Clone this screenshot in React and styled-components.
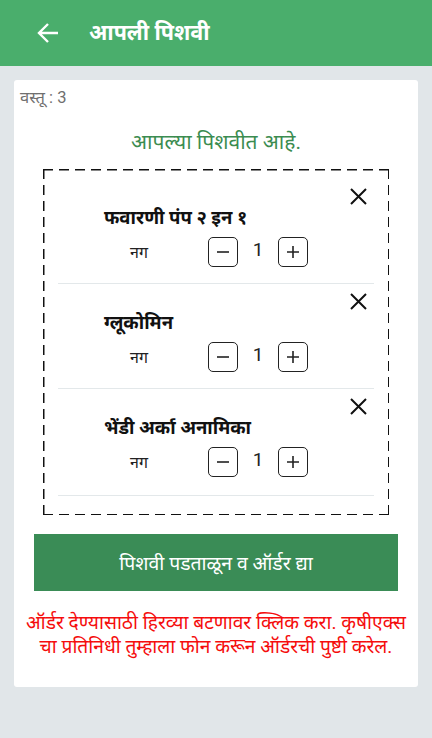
import React, { useState } from "react";
import styled, { createGlobalStyle } from "styled-components";

const Global = createGlobalStyle`
  html, body { margin: 0; padding: 0; }
  body {
    background: #e1e6e9;
    font-family: Roboto, "Noto Sans", "Noto Sans Devanagari", sans-serif;
  }
  * { box-sizing: border-box; }
`;

const Page = styled.div`
  width: 432px;
  min-height: 738px;
  background: #e1e6e9;
  display: flex;
  flex-direction: column;
`;

const Header = styled.header`
  height: 66px;
  background: #4aae6c;
  display: flex;
  align-items: center;
  padding-left: 36px;
  gap: 29px;
  color: #fff;
`;

const Title = styled.h1`
  margin: 0;
  font-size: 21.5px;
  font-weight: 700;
  line-height: 1;
`;

const Card = styled.main`
  margin: 14px 14px 0;
  height: 607px;
  background: #fff;
  border-radius: 3px;
  padding: 8px 0 0;
  display: flex;
  flex-direction: column;
`;

const Count = styled.div`
  padding-left: 6px;
  font-size: 16.5px;
  line-height: 20px;
  color: #6f6f6f;
`;

const Heading = styled.h2`
  margin: 22px 0 15px;
  text-align: center;
  font-size: 21px;
  font-weight: 400;
  line-height: 24px;
  color: #3b8c50;
`;

const DashBox = styled.section`
  margin: 0 29px;
  height: 346px;
  padding: 10px 15px 0;
  background:
    repeating-linear-gradient(90deg, #111 0 10px, transparent 10px 16px) top left / 100% 1.5px no-repeat,
    repeating-linear-gradient(90deg, #111 0 10px, transparent 10px 16px) bottom left / 100% 1.5px no-repeat,
    repeating-linear-gradient(180deg, #111 0 10px, transparent 10px 16px) top left / 1.5px 100% no-repeat,
    repeating-linear-gradient(180deg, #111 0 10px, transparent 10px 16px) top right / 1.5px 100% no-repeat;
`;

const Item = styled.div`
  display: flex;
  flex-direction: column;
  padding-top: 9px;
  border-bottom: 1px solid #e3e8ea;
  height: ${(p) => p.$h}px;
`;

const CloseRow = styled.div`
  height: 18px;
  display: flex;
  justify-content: flex-end;
  padding-right: 7px;
`;

const CloseBtn = styled.button`
  border: 0;
  background: none;
  padding: 0;
  width: 17px;
  height: 17px;
  display: block;
  cursor: pointer;
`;

const Name = styled.div`
  margin-left: 46px;
  font-size: 18.5px;
  font-weight: 700;
  line-height: 24px;
  color: #111;
`;

const QtyRow = styled.div`
  margin-top: 7px;
  margin-left: 72px;
  display: flex;
  align-items: center;
  height: 30px;
`;

const Unit = styled.span`
  width: 78px;
  font-size: 16px;
  color: #222;
`;

const StepBtn = styled.button`
  width: 30px;
  height: 30px;
  border: 1.5px solid #222;
  border-radius: 5px;
  background: #fff;
  padding: 0;
  display: flex;
  align-items: center;
  justify-content: center;
  cursor: pointer;
`;

const Qty = styled.span`
  width: 40px;
  text-align: center;
  font-size: 19px;
  color: #222;
  margin-top: -6px;
`;

const OrderButton = styled.button`
  margin: 19px 20px 0;
  height: 57px;
  border: 0;
  background: #3a8c56;
  color: #fff;
  font-family: inherit;
  font-size: 19.4px;
  cursor: pointer;
`;

const Note = styled.p`
  margin: 20px 6px 0;
  text-align: center;
  color: #f50d0d;
  font-size: 19.2px;
  line-height: 24px;
`;

const Minus = () => (
  <svg width="14" height="14" viewBox="0 0 14 14">
    <path d="M1 7h12" stroke="#222" strokeWidth="1.6" />
  </svg>
);
const Plus = () => (
  <svg width="14" height="14" viewBox="0 0 14 14">
    <path d="M1 7h12M7 1v12" stroke="#222" strokeWidth="1.6" />
  </svg>
);
const Cross = () => (
  <svg width="17" height="17" viewBox="0 0 17 17">
    <path d="M1 1L16 16M16 1L1 16" stroke="#111" strokeWidth="2" />
  </svg>
);
const Back = () => (
  <svg width="24" height="24" viewBox="0 0 24 24">
    <path d="M22 12H3M12 3l-9 9 9 9" fill="none" stroke="#fff" strokeWidth="2.4" />
  </svg>
);

const items = [
  { name: "फवारणी पंप २ इन १", h: 105 },
  { name: "ग्लूकोमिन", h: 105 },
  { name: "भेंडी अर्का अनामिका", h: 107 },
];

export default function App() {
  const [qty, setQty] = useState(items.map(() => 1));
  const change = (i, d) => setQty(qty.map((q, j) => (j === i ? Math.max(1, q + d) : q)));
  return (
    <Page>
      <Global />
      <Header>
        <Back />
        <Title>आपली पिशवी</Title>
      </Header>
      <Card>
        <Count>वस्तू : 3</Count>
        <Heading>आपल्या पिशवीत आहे.</Heading>
        <DashBox>
          {items.map((it, i) => (
            <Item key={i} $h={it.h}>
              <CloseRow>
                <CloseBtn aria-label="remove">
                  <Cross />
                </CloseBtn>
              </CloseRow>
              <Name>{it.name}</Name>
              <QtyRow>
                <Unit>नग</Unit>
                <StepBtn onClick={() => change(i, -1)}>
                  <Minus />
                </StepBtn>
                <Qty>{qty[i]}</Qty>
                <StepBtn onClick={() => change(i, 1)}>
                  <Plus />
                </StepBtn>
              </QtyRow>
            </Item>
          ))}
        </DashBox>
        <OrderButton>पिशवी पडताळून व ऑर्डर द्या</OrderButton>
        <Note>
          ऑर्डर देण्यासाठी हिरव्या बटणावर क्लिक करा. कृषीएक्स चा प्रतिनिधी तुम्हाला फोन करून ऑर्डरची पुष्टी करेल.
        </Note>
      </Card>
    </Page>
  );
}
